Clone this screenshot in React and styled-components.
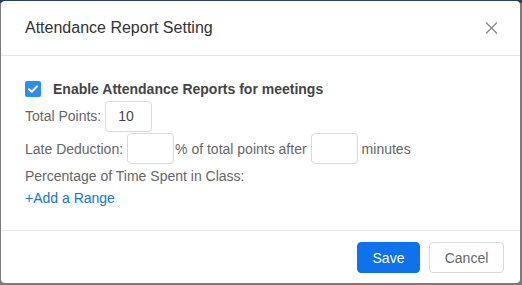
import React from "react";
import styled, { createGlobalStyle } from "styled-components";

const Global = createGlobalStyle`
  html, body { margin: 0; padding: 0; }
  body {
    background: #7b7b7b;
    font-family: "Liberation Sans", Arial, sans-serif;
    width: 522px; height: 285px; overflow: hidden;
  }
`;

const Backdrop = styled.div`
  width: 522px;
  height: 285px;
  box-sizing: border-box;
  padding: 1px 2px 2px 1px;
  background: linear-gradient(#2a3f66 0 3px, #7b7b7b 3px);
`;

const Modal = styled.div`
  background: #fff;
  border-radius: 4px;
  height: 100%;
  display: flex;
  flex-direction: column;
`;

const Header = styled.div`
  height: 54px;
  border-bottom: 1px solid #e6e6e6;
  display: flex;
  align-items: center;
  justify-content: space-between;
  padding: 0 22px 0 24px;
`;

const Title = styled.div`
  font-size: 16px;
  color: #333;
`;

const Close = styled.button`
  border: 0;
  background: none;
  padding: 0;
  width: 13px;
  height: 14px;
  display: flex;
  cursor: pointer;
`;

const Body = styled.div`
  flex: 1;
  padding: 23px 24px 0 24px;
  display: flex;
  flex-direction: column;
  gap: 2px;
  font-size: 14px;
  color: #666;
`;

const Row = styled.div`
  display: flex;
  align-items: center;
  height: ${p => p.$h || 20}px;
`;

const Check = styled.span`
  width: 16px;
  height: 16px;
  border-radius: 2px;
  background: #2d8cf0;
  display: inline-flex;
  align-items: center;
  justify-content: center;
  margin-right: 12px;
`;

const Bold = styled.span`
  font-weight: bold;
  color: #444;
`;

const Input = styled.input`
  box-sizing: border-box;
  width: 47px;
  height: 31px;
  border: 1px solid #d9d9d9;
  border-radius: 4px;
  font-family: inherit;
  font-size: 14px;
  color: #444;
  padding: 0 12px;
  margin: 0 ${p => p.$mr || 0}px 0 ${p => p.$ml || 0}px;
  outline: none;
`;

const Link = styled.a`
  color: #1a73d9;
  text-decoration: none;
  cursor: pointer;
`;

const Footer = styled.div`
  height: 51px;
  border-top: 1px solid #e6e6e6;
  display: flex;
  align-items: center;
  justify-content: flex-end;
  gap: 9px;
  padding: 1px 16px 0 0;
`;

const Button = styled.button`
  box-sizing: border-box;
  height: 31px;
  width: ${p => p.$w}px;
  padding: 0;
  border-radius: 4px;
  font-family: inherit;
  font-size: 14px;
  cursor: pointer;
  border: 1px solid ${p => (p.$primary ? "#0e72ed" : "#d9d9d9")};
  background: ${p => (p.$primary ? "#0e72ed" : "#fff")};
  color: ${p => (p.$primary ? "#fff" : "#666")};
`;

export default function App() {
  return (
    <>
      <Global />
      <Backdrop>
        <Modal>
          <Header>
            <Title>Attendance Report Setting</Title>
            <Close aria-label="close">
              <svg width="13" height="14" viewBox="0 0 13 14">
                <path d="M1 1.5L12 12.5M12 1.5L1 12.5" stroke="#8a8a8a" strokeWidth="1.4" fill="none" />
              </svg>
            </Close>
          </Header>
          <Body>
            <Row>
              <Check>
                <svg width="12" height="10" viewBox="0 0 12 10">
                  <path d="M2 5.2L4.8 7.8L10 2.4" stroke="#fff" strokeWidth="2" fill="none" strokeLinecap="round" strokeLinejoin="round" />
                </svg>
              </Check>
              <Bold>Enable Attendance Reports for meetings</Bold>
            </Row>
            <Row $h={30}>
              Total Points:<Input $ml={4} defaultValue="10" />
            </Row>
            <Row $h={31}>
              Late Deduction:<Input $ml={4} $mr={1} />% of total points after
              <Input $ml={4} $mr={4} /> minutes
            </Row>
            <Row>Percentage of Time Spent in Class:</Row>
            <Row>
              <Link>+Add a Range</Link>
            </Row>
          </Body>
          <Footer>
            <Button $primary $w={63}>Save</Button>
            <Button $w={75}>Cancel</Button>
          </Footer>
        </Modal>
      </Backdrop>
    </>
  );
}
